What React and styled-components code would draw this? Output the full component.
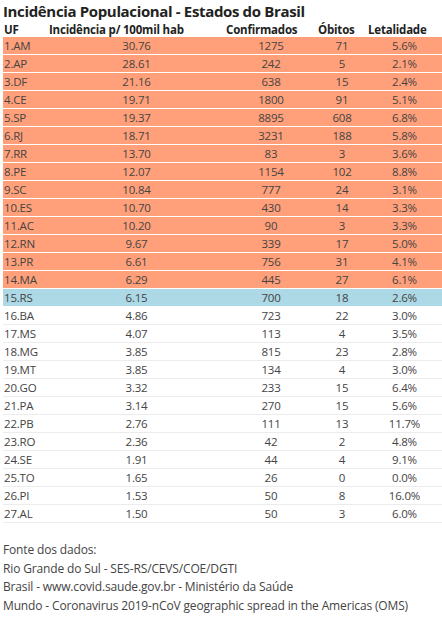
import styled, { createGlobalStyle } from "styled-components";

const Global = createGlobalStyle`
  body {
    margin: 0;
    background: #fff;
    font-family: "Open Sans", "Noto Sans", sans-serif;
    color: #444;
  }
`;

const Page = styled.div`
  width: 442px;
  padding: 0 0 0 3px;
  box-sizing: border-box;
`;

const Title = styled.h1`
  margin: 0;
  height: 22px;
  font-size: 15px;
  line-height: 22px;
  font-weight: 700;
  color: #222;
  letter-spacing: -0.35px;
`;

const cols = "45px 177px 92px 50px 1fr";

const Head = styled.div`
  display: grid;
  grid-template-columns: ${cols};
  height: 15px;
  align-items: center;
  font-size: 11.5px;
  font-weight: 700;
  color: #222;
  letter-spacing: -0.2px;
  span {
    padding-left: 1px;
    white-space: nowrap;
  }
`;

const bg = { hi: "#ffa07a", me: "#add8e6", lo: "#fff" };

const Row = styled.div`
  display: grid;
  grid-template-columns: ${cols};
  height: 17px;
  align-items: center;
  font-size: 11.5px;
  letter-spacing: -0.2px;
  background: ${(p) => bg[p.$tone]};
  border-bottom: 1px solid ${(p) => (p.$tone === "lo" ? "#ececec" : "#fff")};
`;

const Cell = styled.span`
  text-align: ${(p) => (p.$left ? "left" : "center")};
  padding-left: ${(p) => (p.$left ? "1px" : "0")};
`;

const Footer = styled.div`
  margin-top: 18px;
  font-size: 12px;
  line-height: 18.5px;
  letter-spacing: -0.15px;
  color: #444;
`;

const data = [
  ["1.AM", "30.76", "1275", "71", "5.6%"],
  ["2.AP", "28.61", "242", "5", "2.1%"],
  ["3.DF", "21.16", "638", "15", "2.4%"],
  ["4.CE", "19.71", "1800", "91", "5.1%"],
  ["5.SP", "19.37", "8895", "608", "6.8%"],
  ["6.RJ", "18.71", "3231", "188", "5.8%"],
  ["7.RR", "13.70", "83", "3", "3.6%"],
  ["8.PE", "12.07", "1154", "102", "8.8%"],
  ["9.SC", "10.84", "777", "24", "3.1%"],
  ["10.ES", "10.70", "430", "14", "3.3%"],
  ["11.AC", "10.20", "90", "3", "3.3%"],
  ["12.RN", "9.67", "339", "17", "5.0%"],
  ["13.PR", "6.61", "756", "31", "4.1%"],
  ["14.MA", "6.29", "445", "27", "6.1%"],
  ["15.RS", "6.15", "700", "18", "2.6%"],
  ["16.BA", "4.86", "723", "22", "3.0%"],
  ["17.MS", "4.07", "113", "4", "3.5%"],
  ["18.MG", "3.85", "815", "23", "2.8%"],
  ["19.MT", "3.85", "134", "4", "3.0%"],
  ["20.GO", "3.32", "233", "15", "6.4%"],
  ["21.PA", "3.14", "270", "15", "5.6%"],
  ["22.PB", "2.76", "111", "13", "11.7%"],
  ["23.RO", "2.36", "42", "2", "4.8%"],
  ["24.SE", "1.91", "44", "4", "9.1%"],
  ["25.TO", "1.65", "26", "0", "0.0%"],
  ["26.PI", "1.53", "50", "8", "16.0%"],
  ["27.AL", "1.50", "50", "3", "6.0%"],
];

export default function App() {
  return (
    <Page>
      <Global />
      <Title>Incidência Populacional - Estados do Brasil</Title>
      <Head>
        <span>UF</span>
        <span>Incidência p/ 100mil hab</span>
        <span>Confirmados</span>
        <span>Óbitos</span>
        <span>Letalidade</span>
      </Head>
      <div>
        {data.map((r, i) => (
          <Row key={r[0]} $tone={i < 14 ? "hi" : i === 14 ? "me" : "lo"}>
            <Cell $left>{r[0]}</Cell>
            {r.slice(1).map((v, j) => (
              <Cell key={j}>{v}</Cell>
            ))}
          </Row>
        ))}
      </div>
      <Footer>
        <div>Fonte dos dados:</div>
        <div>Rio Grande do Sul - SES-RS/CEVS/COE/DGTI</div>
        <div>Brasil - www.covid.saude.gov.br - Ministério da Saúde</div>
        <div>Mundo - Coronavirus 2019-nCoV geographic spread in the Americas (OMS)</div>
      </Footer>
    </Page>
  );
}
